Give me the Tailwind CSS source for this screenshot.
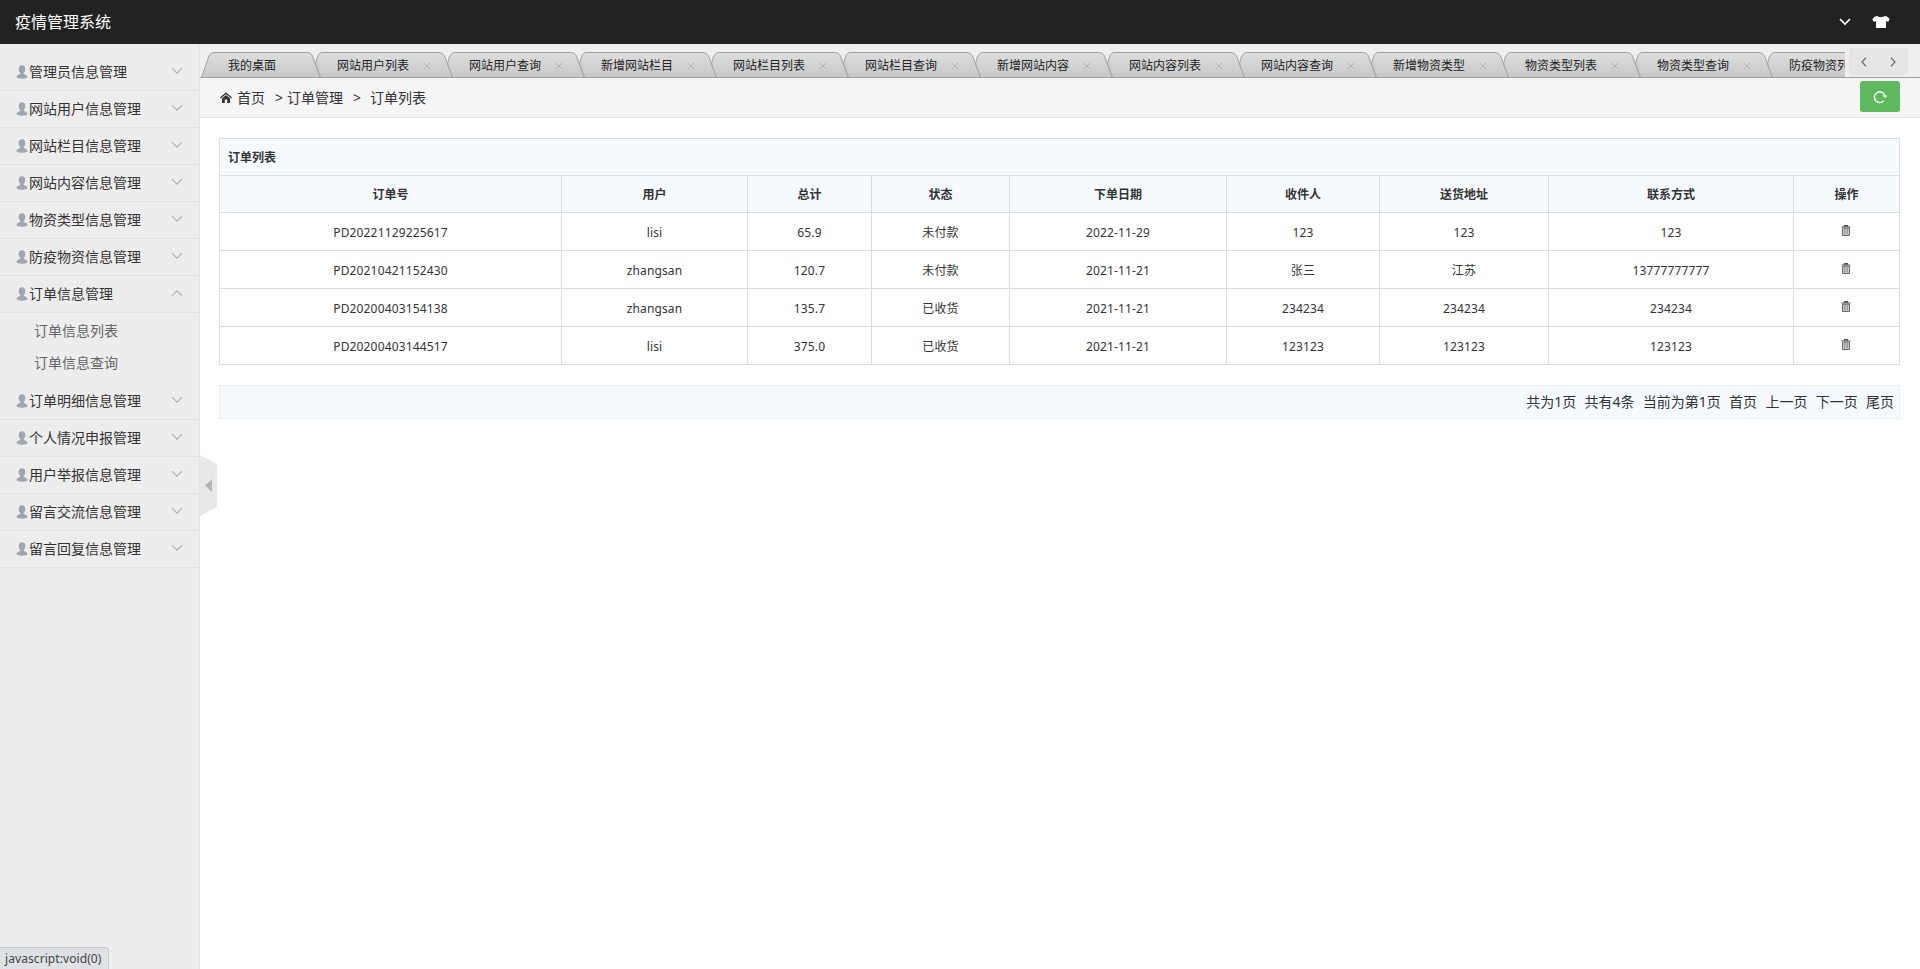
<!DOCTYPE html>
<html lang="zh">
<head>
<meta charset="utf-8">
<title>疫情管理系统</title>
<script src="https://cdn.jsdelivr.net/npm/@tailwindcss/browser@4"></script>
</head>
<body class="flex h-screen flex-col overflow-hidden bg-white font-['Noto_Sans','Noto_Sans_CJK_SC',sans-serif] text-sm text-[#333]">
<svg class="absolute h-0 w-0">
  <linearGradient id="g" gradientUnits="userSpaceOnUse" x1="0" y1="0" x2="0" y2="25"><stop offset="0" stop-color="#dedfdf"/><stop offset="1" stop-color="#c8c8ca"/></linearGradient>
  <symbol id="user" viewBox="0 0 12 14"><path d="M6 .2C8.200.2 9.300 1.700 9.300 3.900c0 1.700-.6 3.100-1.600 4v.9c.5.6 3.800 1 3.800 3.300 0 1.200-2.500 1.700-5.500 1.700S.5 13.300.5 12.100c0-2.300 3.300-2.700 3.800-3.300v-.9c-1-.9-1.600-2.300-1.600-4C2.700 1.700 3.800.2 6 .2z" fill="#9fa6b1"/></symbol>
  <symbol id="down" viewBox="0 0 12 8"><path d="M1 1.200l5 5 5-5" fill="none" stroke="currentColor" stroke-width="1.200"/></symbol>
  <symbol id="trash" viewBox="0 0 10 12"><path d="M3.500 1.500V.7h3v.8M.5 2h9" fill="none" stroke="#555" stroke-width="1.200"/><path d="M1.500 3.200h7v7.300H1.500z" fill="#ccc" stroke="#666"/><path d="M3.800 4v5.500M6.200 4v5.500" stroke="#777" stroke-width=".8"/></symbol>
</svg>
<header class="flex h-11 shrink-0 items-center justify-between bg-[#222] pr-[30px] pl-[15px] text-white">
  <h1 class="text-base leading-[36px]">疫情管理系统</h1>
  <div class="flex items-center gap-[21px]">
    <svg class="h-2 w-3" viewBox="0 0 12 8"><path d="M1 1l5 5 5-5" fill="none" stroke="#fff" stroke-width="1.700"/></svg>
    <svg class="h-3 w-[18px]" viewBox="0 0 18 12"><path d="M5.500 0C6.500 1.600 11.500 1.600 12.500 0L15 .5 17.700 3l-1.500 3-2.200-1v7H4V5L1.800 6 .3 3 3 .5z" fill="#fff"/></svg>
  </div>
</header>
<div class="flex min-h-0 flex-1">
  <aside id="menu" class="w-[200px] shrink-0 border-r border-[#e2e2e2] bg-[#ededed] pt-[10px]"></aside>
  <main class="relative min-w-0 flex-1">
    <div class="flex h-[34px] border-b border-[#a0a0a0] bg-[#efeef0]">
      <div id="tabs" class="flex w-[1645px] shrink-0 overflow-hidden pt-2 text-xs text-[#222]"></div>
      <div class="mt-1 ml-1 flex h-[27px] w-[59px] items-center justify-around rounded-[3px] bg-[#e5e5e5]">
        <svg class="h-[10px] w-[6px]" viewBox="0 0 6 10"><path d="M5 .7L1 5l4 4.300" fill="none" stroke="#666" stroke-width="1.200"/></svg>
        <svg class="h-[10px] w-[6px]" viewBox="0 0 6 10"><path d="M1 .7L5 5 1 9.300" fill="none" stroke="#666" stroke-width="1.200"/></svg>
      </div>
    </div>
    <nav class="flex h-10 items-center border-b border-[#e5e5e5] bg-[#f5f5f5] pr-5 pl-5">
      <svg class="h-[11px] w-3" viewBox="0 0 12 11"><path d="M0 5.600L6 .3l6 5.300-.8.9L6 2 .8 6.500z" fill="#333"/><path d="M2 6.400L6 3l4 3.400V11H7.200V7.500H4.800V11H2z" fill="#333"/></svg>
      <span class="ml-[5px]">首页</span><span class="ml-[10px] w-[12px]">&gt;</span><span>订单管理</span><span class="ml-[10px] w-[17px]">&gt;</span><span>订单列表</span>
      <button class="mb-[2px] ml-auto flex h-[31px] w-10 items-center justify-center rounded-[3px] bg-[#5eb95e]">
        <svg class="h-[14px] w-[14px]" viewBox="0 0 14 14"><path d="M10.800 10.800A5.400 5.400 0 1 1 12 6" fill="none" stroke="#fff" stroke-width="1.400"/><path d="M9 5.600h4.800L12.800 8z" fill="#fff"/></svg>
      </button>
    </nav>
    <div class="pt-5 pr-5 pl-[19px]">
      <table class="w-[1681px] table-fixed border-collapse text-center text-xs leading-5 [&_td]:border [&_th]:border [&_td]:border-[#ddd] [&_th]:border-[#ddd]">
        <colgroup><col class="w-[342px]"><col class="w-[186px]"><col class="w-[124px]"><col class="w-[138px]"><col class="w-[217px]"><col class="w-[153px]"><col class="w-[169px]"><col class="w-[245px]"><col class="w-[106px]"></colgroup>
        <thead class="bg-[#f5fafe] [&_th]:pt-0.5">
          <tr class="h-[37px]"><th colspan="9" class="px-2 text-left font-bold">订单列表</th></tr>
          <tr class="h-[37px]"><th>订单号</th><th>用户</th><th>总计</th><th>状态</th><th>下单日期</th><th>收件人</th><th>送货地址</th><th>联系方式</th><th>操作</th></tr>
        </thead>
        <tbody id="rows" class="tracking-[0.14px]"></tbody>
      </table>
      <div class="mt-5 flex h-[34px] w-[1681px] items-center justify-end gap-[8.300px] border border-[#e9eef1] bg-[#f5fafe] pr-[5px]">
        <span>共为1页</span><span>共有4条</span><span>当前为第1页</span><a>首页</a><a>上一页</a><a>下一页</a><a>尾页</a>
      </div>
    </div>
    <svg class="absolute top-[411px] left-0 h-[61px] w-[17px]" viewBox="0 0 17 61"><path d="M0 0l17 9v43L0 61z" fill="#e8e8e8"/><path d="M12 24v13l-7-6.500z" fill="#b5b5b5"/></svg>
  </main>
</div>
<div class="absolute bottom-0 left-0 h-[22px] w-[109px] rounded-tr border-t border-r border-[#c8cbce] bg-[#dee1e6] pl-[5px] text-xs leading-[21px] tracking-[0.08px] text-[#444]">javascript:void(0)</div>
<script>
const menu = ['管理员信息管理','网站用户信息管理','网站栏目信息管理','网站内容信息管理','物资类型信息管理','防疫物资信息管理','订单信息管理','订单明细信息管理','个人情况申报管理','用户举报信息管理','留言交流信息管理','留言回复信息管理'];
document.getElementById('menu').innerHTML = menu.map((m, i) => `
  <div class="flex h-[37px] items-center border-b border-[#e2e2e2] pr-4 pl-4"><svg class="h-[14px] w-3"><use href="#user"/></svg><span class="ml-[1px]">${m}</span><svg class="mb-[2px] ml-auto h-2 w-3 text-[#b0b0b0] ${i === 6 ? 'rotate-180' : ''}"><use href="#down"/></svg></div>
  ${i === 6 ? '<div class="pt-[2px] pb-[4px] pl-[34px] leading-8 text-[#666]"><div>订单信息列表</div><div>订单信息查询</div></div>' : ''}`).join('');
const tabs = ['网站用户列表','网站用户查询','新增网站栏目','网站栏目列表','网站栏目查询','新增网站内容','网站内容列表','网站内容查询','新增物资类型','物资类型列表','物资类型查询','防疫物资列表'];
document.getElementById('tabs').innerHTML = `
  <div class="relative h-[25px] w-[110px] shrink-0 pl-[28px] leading-[27px]"><svg class="absolute top-0 left-0 h-[26px] w-[122px]"><path d="M1.500 25.500L9 4Q10.500.5 14 .5H108Q111 .5 112.500 4L120.500 25.500" fill="url(#g)" stroke="#a0a0a0"/></svg><span class="relative">我的桌面</span></div>` + tabs.map(t => `
  <div class="relative flex h-[25px] w-[132px] shrink-0 items-center pl-[27px] leading-[27px]"><svg class="absolute top-0 left-0 h-[26px] w-[144px]"><path d="M10.500 25.500L5.500 11.500Q8 .5 12 .5H129Q133 .5 134.500 4L142.500 25.500z" fill="url(#g)"/><path d="M10.500 25.500L5.500 11.500Q8 .5 12 .5H129Q133 .5 134.500 4L142.500 25.500" fill="none" stroke="#a0a0a0"/></svg><span class="relative pt-[2px]">${t}</span><svg class="relative mt-[2px] ml-[14px] h-2 w-2" viewBox="0 0 8 8"><path d="M.7.7l6.600 6.600M7.300.7L.7 7.300" stroke="#aeb4ba"/></svg></div>`).join('');
const rows = [
  ['PD20221129225617','lisi','65.9','未付款','2022-11-29','123','123','123'],
  ['PD20210421152430','zhangsan','120.7','未付款','2021-11-21','张三','江苏','13777777777'],
  ['PD20200403154138','zhangsan','135.7','已收货','2021-11-21','234234','234234','234234'],
  ['PD20200403144517','lisi','375.0','已收货','2021-11-21','123123','123123','123123']];
document.getElementById('rows').innerHTML = rows.map(r => `<tr class="h-[38px]">${r.map(c => `<td class="pt-0.5">${c}</td>`).join('')}<td class="pr-px pb-px"><svg class="mx-auto h-3 w-[10px]"><use href="#trash"/></svg></td></tr>`).join('');
</script>
</body>
</html>
